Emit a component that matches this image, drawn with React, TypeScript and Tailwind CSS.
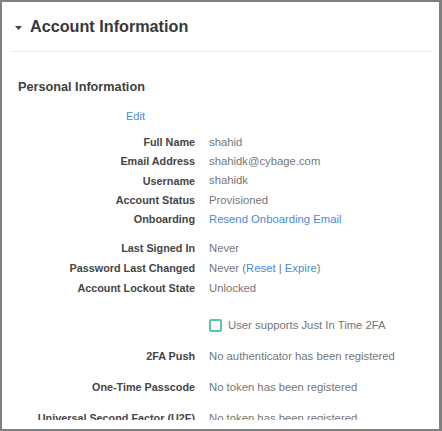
import React from "react";

const font = { fontFamily: '"Liberation Sans", Arial, sans-serif' };

function Row({ label, children, h = "h-[19.3px]" }: { label: string; children?: React.ReactNode; h?: string }) {
  return (
    <div className={`flex items-center ${h}`}>
      <div className="w-[193px] shrink-0 text-right font-bold text-[10.8px] text-[#454545] whitespace-nowrap">{label}</div>
      <div className="ml-[14px] text-[11.3px] text-[#767676] whitespace-nowrap">{children}</div>
    </div>
  );
}

export default function App() {
  return (
    <div
      className="w-[442px] h-[431px] box-border border-l-2 border-t-2 border-r-[3px] border-b-2 border-[#808080] bg-white overflow-hidden"
      style={font}
    >
      <div className="h-[418px] overflow-hidden">
        <div className="h-[49px] flex items-center">
          <svg width="7" height="4" viewBox="0 0 7 4" className="ml-[13px] mt-[2px]">
            <polygon points="0,0 7,0 3.5,4" fill="#444" />
          </svg>
          <div className="ml-[8px] text-[16.2px] font-bold text-[#383838]">Account Information</div>
        </div>
        <div className="h-px bg-[#ececec] ml-[8px] mr-[7px]" />
        <div className="mt-[27px] ml-[16px] leading-[16px] text-[12.7px] font-bold text-[#404040]">Personal Information</div>
        <div className="mt-[11.5px] ml-[124px] leading-[19px] text-[11px] text-[#4a8ad8]">Edit</div>
        <div className="mt-[7px] flex flex-col">
          <Row label="Full Name">shahid</Row>
          <Row label="Email Address">shahidk@cybage.com</Row>
          <Row label="Username">shahidk</Row>
          <Row label="Account Status">Provisioned</Row>
          <Row label="Onboarding">
            <span className="text-[#4a8ad8]">Resend Onboarding Email</span>
          </Row>
        </div>
        <div className="mt-[9.5px] flex flex-col">
          <Row label="Last Signed In" h="h-[20px]">Never</Row>
          <Row label="Password Last Changed" h="h-[20px]">
            Never (<span className="text-[#4a8ad8]">Reset</span> | <span className="text-[#4a8ad8]">Expire</span>)
          </Row>
          <Row label="Account Lockout State" h="h-[20px]">Unlocked</Row>
        </div>
        <div className="mt-[17px] h-[20px] flex items-center ml-[207px]">
          <div className="w-[13px] h-[13px] border-2 border-[#5cc4a6] rounded-[2px] box-border" />
          <span className="ml-[6px] text-[11.3px] text-[#767676] whitespace-nowrap">User supports Just In Time 2FA</span>
        </div>
        <div className="mt-[11px] flex flex-col gap-[11px]">
          <Row label="2FA Push" h="h-[20px]">No authenticator has been registered</Row>
          <Row label="One-Time Passcode" h="h-[20px]">No token has been registered</Row>
          <Row label="Universal Second Factor (U2F)" h="h-[20px]">No token has been registered</Row>
        </div>
      </div>
    </div>
  );
}
